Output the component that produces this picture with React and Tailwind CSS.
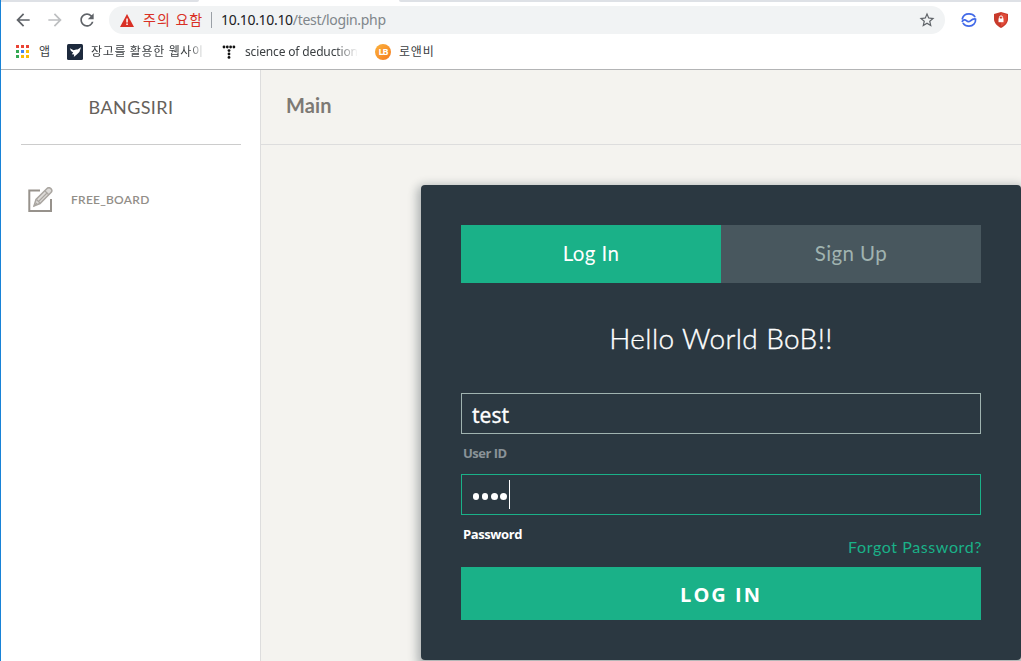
import { MdArrowBack, MdArrowForward, MdRefresh, MdStarBorder } from 'react-icons/md';

const APP_DOTS = [
  '#ea4335', '#ea4335', '#ea4335',
  '#34a853', '#4285f4', '#fbbc05',
  '#34a853', '#fbbc05', '#fbbc05',
];

function Toolbar() {
  return (
    <div className="flex h-9 items-center pl-3">
      <MdArrowBack className="size-5 shrink-0 text-[#5f6368]" />
      <MdArrowForward className="ml-3 size-5 shrink-0 text-[#bdbfc1]" />
      <MdRefresh className="ml-3 size-5 shrink-0 text-[#5f6368]" />
      <div className="ml-3 flex h-7 w-[836px] shrink-0 items-center rounded-full bg-[#f1f3f4] pr-[9px] pl-[11px]">
        <svg className="h-[13px] w-[14px] shrink-0" viewBox="0 0 14 13">
          <path d="M7 0 14 13H0Z" fill="#d93025" />
          <path d="M6.3 4.5h1.5v4H6.3zM6.3 9.6h1.5v1.5H6.3z" fill="#fff" />
        </svg>
        <span className="ml-[9px] w-[60px] text-[14px] leading-5 tracking-[1px] whitespace-nowrap text-[#d93025]">주의 요함</span>
        <span className="ml-[8px] h-4 w-px bg-[#9aa0a6]" />
        <span className="ml-[9px] text-[14px] leading-5 tracking-[-0.32px] whitespace-nowrap text-[#80868b]">
          <span className="text-[#202124]">10.10.10.10</span>/test/login.php
        </span>
        <MdStarBorder className="ml-auto size-[18px] text-[#5f6368]" />
      </div>
      <svg className="ml-4 size-4 shrink-0" viewBox="0 0 16 16" fill="none" stroke="#4169e8" strokeWidth="1.7" strokeLinecap="round" strokeLinejoin="round">
        <path d="M1.3 6.8C2 3.6 4.6 1.8 8 1.8c2.6 0 4.6 1 5.8 2.8" />
        <path d="M1.3 9.4C2.6 7.8 4 7.4 5.4 8.6c1.4 1.4 2.6 1.4 4 .2C11.200 7.200 12.600 6.600 14.600 7c.3 4.200-2.600 7.200-6.600 7.200-2.600 0-4.600-1-5.800-2.800" />
      </svg>
      <svg className="ml-[17px] h-[16px] w-[14px] shrink-0" viewBox="0 0 14 16">
        <path d="M7 0 14 2v5c0 4-3 7-7 9-4-2-7-5-7-9V2Z" fill="#c83a2b" />
        <path d="M7 1.2 12.8 2.8V7c0 3.2-2.4 5.8-5.8 7.6Z" fill="#e04b39" />
        <path d="M5.4 7V5.500a1.600 1.600 0 0 1 3.200 0V7" fill="none" stroke="#fff" strokeWidth="1" />
        <path d="M4.500 6.500h5v3.700h-5z" fill="#fff" />
      </svg>
    </div>
  );
}

function Bookmarks() {
  return (
    <div className="flex h-[31px] items-center pb-[4px] pl-[15px] text-[12px] leading-4 text-[#3c4043]">
      <div className="grid grid-cols-3 gap-[2px]">
        {APP_DOTS.map((color, i) => (
          <span key={i} className="size-[3px]" style={{ backgroundColor: color }} />
        ))}
      </div>
      <span className="ml-[10px] w-[11px] whitespace-nowrap">앱</span>
      <svg className="ml-[17px] size-4 shrink-0" viewBox="0 0 16 16">
        <rect width="16" height="16" rx="1.5" fill="#1d2a3d" />
        <path d="M2.8 4.2 6.6 6.2 9.2 5.4 10.6 5.600 14 3.200 12.400 8 9.800 10.600 6.800 13 7.200 10.400 4.800 10.200 6.200 8.600 4 7Z" fill="#fff" />
      </svg>
      <span className="ml-[8px] w-[113px] mask-r-from-88% tracking-[0.65px] whitespace-nowrap">장고를 활용한 웹사이</span>
      <svg className="ml-[18px] size-[14px] shrink-0" viewBox="0 0 14 14" fill="#111">
        <circle cx="2" cy="2" r="1.4" /><circle cx="5.3" cy="2" r="1.4" /><circle cx="8.6" cy="2" r="1.4" /><circle cx="11.9" cy="2" r="1.4" />
        <circle cx="7" cy="5.6" r="1.4" /><circle cx="7" cy="9" r="1.4" /><circle cx="7" cy="12.4" r="1.4" />
      </svg>
      <span className="ml-[9px] w-[113px] mask-r-from-80% tracking-[-0.15px] whitespace-nowrap">science of deduction</span>
      <span className="ml-[17px] flex size-4 shrink-0 items-center justify-center rounded-full bg-linear-to-br from-[#fbb33c] to-[#f47a1f] text-[9px] font-bold tracking-[-1px] text-white">LB</span>
      <span className="ml-[8px] tracking-[0.8px] whitespace-nowrap">로앤비</span>
    </div>
  );
}

function Sidebar() {
  return (
    <aside className="flex w-[260px] shrink-0 flex-col border-r border-[#dddddd] bg-white pr-[19px] pl-5 font-[Lato,sans-serif]">
      <div className="flex h-[75px] items-center justify-center border-b border-[#cccccc] pb-px text-[18px] leading-6 tracking-[0.4px] text-[#66615b]">
        BANGSIRI
      </div>
      <div className="mt-[42px] flex items-center pl-[7px]">
        <svg className="h-[26px] w-[26px] shrink-0" viewBox="0 0 26 26" fill="none">
          <path d="M12 3.500H1.300v20.500H23V12" stroke="#97928c" strokeWidth="2" />
          <path d="M6 19 8 12.500 19 1.500c1.400-1.200 2.800-1 3.900.1 1.200 1.200 1.400 2.600.1 3.900L12 16.500Z" fill="#dddbd8" stroke="#aaa6a1" strokeWidth="1.500" />
          <path d="M8.500 12.500 12 16.200M17 4l4 4M10.500 14.500 19.500 5.500M6 19l3-3" stroke="#aaa6a1" strokeWidth="1.200" />
        </svg>
        <span className="ml-[17px] text-[12px] leading-5 font-semibold tracking-[0.25px] text-[#928e88]">FREE_BOARD</span>
      </div>
    </aside>
  );
}

function LoginCard() {
  return (
    <section className="mt-10 ml-40 h-[475px] w-[600px] rounded-[4px] bg-[#2b3841] p-10 font-[Lato,sans-serif] shadow-[0_4px_10px_4px_rgba(19,35,47,0.3)]">
      <div className="flex h-[58px] text-[20.5px] leading-[57px] tracking-[0.4px]">
        <div className="flex-1 bg-[#1ab188] text-center text-white">Log In</div>
        <div className="flex-1 bg-[#48575e] text-center text-[#a0b3b0]">Sign Up</div>
      </div>
      <h1 className="mt-[37px] h-9 text-center text-[28px] leading-9 font-light tracking-[0.4px] whitespace-nowrap text-white [-webkit-text-stroke:0.35px_white]">Hello World BoB!!</h1>
      <div className="mt-[37px] flex h-[41px] items-center border border-[#a0b3b0] px-[10px] pt-[3px] font-['Noto_Sans',sans-serif] text-[21px] leading-8 text-white [-webkit-text-stroke:0.3px_white]">
        test
      </div>
      <div className="mt-[9px] pl-[2px] font-['Open_Sans',sans-serif] text-[13px] leading-[20px] font-bold tracking-[-0.5px] text-[#8a9398]">User ID</div>
      <div className="mt-[11px] flex h-[41px] items-center border border-[#1ab188] px-[11px]">
        <span className="flex gap-[2.7px] pt-[4px]">
          <i className="size-[6.4px] rounded-full bg-white" />
          <i className="size-[6.4px] rounded-full bg-white" />
          <i className="size-[6.4px] rounded-full bg-white" />
          <i className="size-[6.4px] rounded-full bg-white" />
        </span>
        <span className="ml-[2.3px] h-[29px] w-px bg-white" />
      </div>
      <div className="flex h-[52px] justify-between pl-[2px]">
        <span className="pt-[9px] font-['Open_Sans',sans-serif] text-[13px] leading-[20px] font-bold tracking-[-0.4px] text-white">Password</span>
        <span className="-mr-px pt-[20px] text-[16px] leading-6 tracking-[0.6px] text-[#1ab188]">Forgot Password?</span>
      </div>
      <div className="h-[53px] bg-[#1ab188] text-center font-['Open_Sans',sans-serif] text-[20px] leading-[55px] font-bold tracking-[2px] text-white">LOG IN</div>
    </section>
  );
}

export default function App() {
  return (
    <div className="flex h-[661px] w-[1021px] flex-col overflow-hidden border-l border-[#1883d7] bg-white font-['Noto_Sans','Noto_Sans_CJK_KR',sans-serif]">
      <div className="flex h-[2px] shrink-0 justify-between">
        <div className="w-[198px] rounded-br-[2px] bg-[#dee1e6]" />
        <div className="w-[622px] rounded-bl-[2px] bg-[#dee1e6]" />
      </div>
      <Toolbar />
      <Bookmarks />
      <div className="flex h-[592px] shrink-0 border-t border-[#b3b4b5]">
        <Sidebar />
        <main className="w-[760px] shrink-0 overflow-hidden bg-[#f4f3ef]">
          <header className="flex h-[75px] items-center border-b border-[#dddddd] pb-[5px] pl-[25px] font-[Lato,sans-serif] text-[20px] font-bold tracking-[0.1px] text-[#7c7974]">
            Main
          </header>
          <LoginCard />
        </main>
      </div>
    </div>
  );
}
